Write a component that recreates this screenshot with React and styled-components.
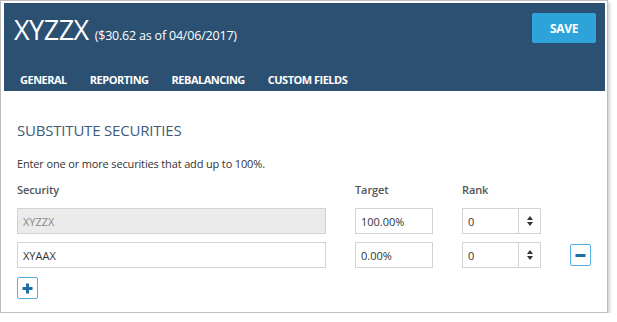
import React from "react";
import styled, { createGlobalStyle } from "styled-components";

const Global = createGlobalStyle`
  html, body { margin: 0; padding: 0; background: #fff; }
  body { font-family: "Open Sans", "Noto Sans", sans-serif; }
  * { box-sizing: border-box; }
`;

const Card = styled.div`
  width: 608px;
  height: 313px;
  border: 1px solid #bdbdbd;
  box-shadow: 2px 2px 3px rgba(0, 0, 0, 0.18);
  padding: 2px 2px 0 3px;
  background: #fff;
`;

const Header = styled.header`
  background: #2c5072;
  height: 88px;
  display: flex;
  flex-direction: column;
  padding: 0 9px 0 10px;
`;

const TopRow = styled.div`
  display: flex;
  align-items: flex-start;
  justify-content: space-between;
  height: 64px;
  padding-top: 10px;
`;

const TitleWrap = styled.div`
  display: flex;
  align-items: baseline;
  gap: 6px;
  color: #fff;
  margin-top: 0px;
`;

const Title = styled.h1`
  margin: 0;
  font-size: 27px;
  font-weight: 400;
  letter-spacing: -0.5px;
  line-height: 34px;
`;

const Sub = styled.span`
  font-size: 12.5px;
  letter-spacing: -0.2px;
`;

const SaveButton = styled.button`
  width: 64px;
  height: 30px;
  border: none;
  border-radius: 2px;
  background: #2ea3da;
  color: #fff;
  font-family: inherit;
  font-weight: 700;
  font-size: 12px;
  letter-spacing: -0.3px;
`;

const Tabs = styled.nav`
  display: flex;
  gap: 23px;
  padding-left: 6px;
  height: 24px;
  align-items: center;
`;

const Tab = styled.span`
  color: #fff;
  font-size: 11px;
  font-weight: 700;
  letter-spacing: -0.5px;
`;

const Body = styled.section`
  padding: 29px 0 0 13px;
  color: #333;
`;

const SectionTitle = styled.h2`
  margin: 0;
  font-size: 15px;
  font-weight: 400;
  color: #405a78;
  letter-spacing: -0.2px;
  line-height: 20px;
`;

const Hint = styled.p`
  margin: 16px 0 0;
  font-size: 11px;
  letter-spacing: -0.15px;
  line-height: 16px;
  color: #333;
`;

const Grid = styled.div`
  display: grid;
  grid-template-columns: 309px 78px 79px 21px;
  column-gap: 29px;
  row-gap: 8px;
  margin-top: 10px;
  align-items: center;
`;

const Label = styled.div`
  font-size: 11px;
  font-weight: 600;
  color: #555;
  letter-spacing: -0.1px;
  line-height: 16px;
  margin-bottom: 2px;
`;

const Field = styled.div`
  height: 26px;
  border: 1px solid #d3d3d3;
  background: ${(p) => (p.disabled ? "#ebebeb" : "#fff")};
  color: ${(p) => (p.disabled ? "#8a8a8a" : "#333")};
  font-size: 11px;
  display: flex;
  align-items: center;
  padding-left: 5px;
`;

const Spin = styled.div`
  height: 26px;
  border: 1px solid #d3d3d3;
  display: grid;
  grid-template-columns: 1fr 21px;
  font-size: 11px;
  color: #333;
`;

const SpinValue = styled.div`
  display: flex;
  align-items: center;
  padding-left: 5px;
  border-right: 1px solid #d3d3d3;
`;

const SpinArrows = styled.div`
  display: flex;
  flex-direction: column;
  align-items: center;
  justify-content: center;
  gap: 2px;
`;

const Tri = styled.span`
  width: 0;
  height: 0;
  border-left: 3px solid transparent;
  border-right: 3px solid transparent;
  ${(p) =>
    p.down ? "border-top: 4px solid #333;" : "border-bottom: 4px solid #333;"}
`;

const IconButton = styled.button`
  width: 21px;
  height: 22px;
  padding: 0;
  border: 1px solid #54b0e0;
  border-radius: 2px;
  background: #fff;
  display: flex;
  align-items: center;
  justify-content: center;
`;

const AddRow = styled.div`
  margin-top: 9px;
`;

function Spinner({ value }) {
  return (
    <Spin>
      <SpinValue>{value}</SpinValue>
      <SpinArrows>
        <Tri />
        <Tri down />
      </SpinArrows>
    </Spin>
  );
}

const Minus = () => (
  <svg width="11" height="11" viewBox="0 0 11 11">
    <rect x="0.5" y="4" width="10" height="3" fill="#1f6ea8" />
  </svg>
);

const Plus = () => (
  <svg width="11" height="11" viewBox="0 0 11 11">
    <rect x="0.5" y="4" width="10" height="3" fill="#1f6ea8" />
    <rect x="4" y="0.5" width="3" height="10" fill="#1f6ea8" />
  </svg>
);

export default function App() {
  return (
    <>
      <Global />
      <Card>
        <Header>
          <TopRow>
            <TitleWrap>
              <Title>XYZZX</Title>
              <Sub>($30.62 as of 04/06/2017)</Sub>
            </TitleWrap>
            <SaveButton>SAVE</SaveButton>
          </TopRow>
          <Tabs>
            <Tab>GENERAL</Tab>
            <Tab>REPORTING</Tab>
            <Tab>REBALANCING</Tab>
            <Tab>CUSTOM FIELDS</Tab>
          </Tabs>
        </Header>
        <Body>
          <SectionTitle>SUBSTITUTE SECURITIES</SectionTitle>
          <Hint>Enter one or more securities that add up to 100%.</Hint>
          <Grid>
            <Label>Security</Label>
            <Label>Target</Label>
            <Label>Rank</Label>
            <div />
            <Field disabled>XYZZX</Field>
            <Field>100.00%</Field>
            <Spinner value="0" />
            <div />
            <Field>XYAAX</Field>
            <Field>0.00%</Field>
            <Spinner value="0" />
            <IconButton aria-label="remove">
              <Minus />
            </IconButton>
          </Grid>
          <AddRow>
            <IconButton aria-label="add">
              <Plus />
            </IconButton>
          </AddRow>
        </Body>
      </Card>
    </>
  );
}
